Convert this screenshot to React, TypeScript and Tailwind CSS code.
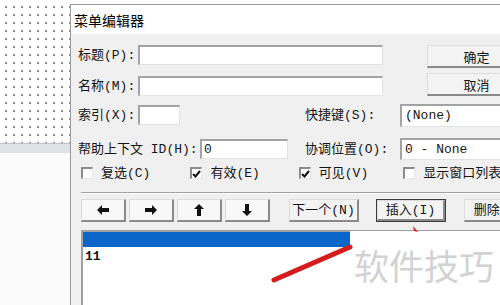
import type { ReactNode } from 'react'

const MIX = "font-['Liberation_Mono','Noto_Sans_CJK_SC',monospace]"
const CJK = "font-['Noto_Sans_CJK_SC',sans-serif]"

const INPUT =
  'h-[20px] bg-white border-t-2 border-l-2 border-[#a3a3a3] border-r border-b border-r-[#e2e2e2] border-b-[#e2e2e2]'
const RAISED =
  'flex items-center justify-center h-[23px] bg-[#f3f3f3] border-t border-l border-[#dcdcdc] border-r-2 border-b-2 border-r-[#8a8a8a] border-b-[#8a8a8a]'

function Arrow({ dir }: { dir: 'left' | 'right' | 'up' | 'down' }) {
  const rot = { left: 0, right: 180, up: 90, down: 270 }[dir]
  return (
    <svg width="12" height="10" viewBox="0 0 12 10" style={{ transform: `rotate(${rot}deg)` }}>
      <path d="M0 5 L5 0 L5 3 L12 3 L12 7 L5 7 L5 10 Z" fill="#111" />
    </svg>
  )
}

function Check({ checked, label, w }: { checked?: boolean; label: string; w: string }) {
  return (
    <div className={`flex items-center ${w}`}>
      <div className="w-[12px] h-[12px] bg-white border-t-2 border-l-2 border-[#8c8c8c] border-r border-b border-r-[#e5e5e5] border-b-[#e5e5e5] flex items-center justify-center">
        {checked && (
          <svg width="9" height="8" viewBox="0 0 9 8">
            <path d="M1 4 L3.5 6.5 L8 1" stroke="#111" strokeWidth="2" fill="none" />
          </svg>
        )}
      </div>
      <span className="ml-[8px]">{label}</span>
    </div>
  )
}

function Label({ w, children }: { w: string; children: ReactNode }) {
  return <div className={`${w} shrink-0 whitespace-nowrap`}>{children}</div>
}

export default function App() {
  return (
    <div className="relative w-[500px] h-[305px] overflow-hidden bg-white">
      {/* desktop behind the dialog */}
      <div className="flex flex-col w-[70px] h-full">
        <div className="h-[143px] bg-white bg-[radial-gradient(#8f8f8f_0.8px,transparent_1.2px)] bg-[size:8px_8px] bg-[position:2px_3px]" />
        <div className="h-[10px] bg-[#dde2e8] border-t border-[#b9c4d2]" />
        <div className="flex-1 bg-[#fbfbfb]" />
      </div>

      {/* dialog */}
      <div className={`absolute left-[70px] top-[4px] w-[470px] h-[330px] flex flex-col bg-[#f0f0f0] border-l border-t border-[#9a9a9a] text-[13px] leading-none text-[#151515] ${MIX}`}>
        <div className={`h-[29px] shrink-0 bg-white flex items-center pl-[3px] text-[14px] text-black ${CJK}`}>
          菜单编辑器
        </div>

        <div className="flex flex-col pl-[7px]">
          {/* title / name + ok / cancel */}
          <div className="flex mt-[11px]">
            <div className="flex flex-col gap-[11px]">
              <div className="flex items-center">
                <Label w="w-[60px]">标题(P):</Label>
                <div className={`${INPUT} w-[245px]`} />
              </div>
              <div className="flex items-center">
                <Label w="w-[60px]">名称(M):</Label>
                <div className={`${INPUT} w-[245px]`} />
              </div>
            </div>
            <div className="flex flex-col gap-[5px] ml-[44px]">
              <div className={`${RAISED} w-[100px] ${CJK}`}>确定</div>
              <div className={`${RAISED} w-[100px] ${CJK}`}>取消</div>
            </div>
          </div>

          {/* index / shortcut */}
          <div className="flex items-center h-[22px] mt-[8px]">
            <Label w="w-[60px]">索引(X):</Label>
            <div className={`${INPUT} w-[42px]`} />
            <div className="ml-[125px] flex items-center">
              <Label w="w-[95px]">快捷键(S):</Label>
              <div className={`${INPUT} h-[23px] w-[120px] flex items-center pl-[3px]`}>(None)</div>
            </div>
          </div>

          {/* help id / negotiate position */}
          <div className="flex items-center h-[22px] mt-[12px]">
            <Label w="w-[122px]">帮助上下文 ID(H):</Label>
            <div className={`${INPUT} w-[88px] flex items-center pl-[2px]`}>0</div>
            <div className="ml-[17px] flex items-center">
              <Label w="w-[95px]">协调位置(O):</Label>
              <div className={`${INPUT} h-[22px] w-[120px] flex items-center pl-[3px] whitespace-nowrap`}>0 - None</div>
            </div>
          </div>

          {/* checkboxes */}
          <div className="flex items-center h-[14px] mt-[6px] pl-[3px] whitespace-nowrap">
            <Check label="复选(C)" w="w-[112px]" />
            <Check checked label="有效(E)" w="w-[111px]" />
            <Check checked label="可见(V)" w="w-[107px]" />
            <Check label="显示窗口列表(W)" w="w-[140px]" />
          </div>

          <div className="mt-[12px] ml-[3px] h-[2px] border-t border-[#a0a0a0] border-b border-b-white" />

          {/* buttons */}
          <div className="flex items-center mt-[5px] ml-[3px] whitespace-nowrap">
            <div className="flex gap-[3px]">
              <div className={`${RAISED} w-[45px] bg-[#f8f8f8]`}><Arrow dir="left" /></div>
              <div className={`${RAISED} w-[45px] bg-[#f8f8f8]`}><Arrow dir="right" /></div>
              <div className={`${RAISED} w-[45px] bg-[#f8f8f8]`}><Arrow dir="up" /></div>
              <div className={`${RAISED} w-[45px] bg-[#f8f8f8]`}><Arrow dir="down" /></div>
            </div>
            <div className={`${RAISED} w-[70px] ml-[19px]`}>下一个(N)</div>
            <div className="ml-[17px] w-[70px] h-[23px] border border-[#3c3c3c]">
              <div className={`${RAISED} h-full`}>插入(I)</div>
            </div>
            <div className={`${RAISED} w-[70px] ml-[18px]`}>删除(D)</div>
          </div>

          {/* list */}
          <div className="mt-[8px] ml-[3px] h-[90px] bg-white border-t-2 border-l-2 border-[#a0a0a0] flex flex-col">
            <div className="h-[15px] bg-[#0a66c8]" />
            <div className="pl-[2px] pt-[3px] text-[13px] font-bold">11</div>
          </div>
        </div>
      </div>

      {/* watermark overlay */}
      <div className={`absolute left-[350px] top-[231px] w-[150px] h-[74px] bg-white flex items-start pt-[16px] pl-[4px] text-[35px] leading-none text-[#d2d2d2] whitespace-nowrap ${CJK}`}>
        软件技巧
      </div>
      <svg className="absolute left-0 top-0" width="500" height="305">
        <line x1="274" y1="280" x2="350" y2="247" stroke="#d41c1c" strokeWidth="5" strokeLinecap="round" />
        <path d="M413 226 L418 232 L414 231 Z" fill="#d41c1c" />
      </svg>
    </div>
  )
}
